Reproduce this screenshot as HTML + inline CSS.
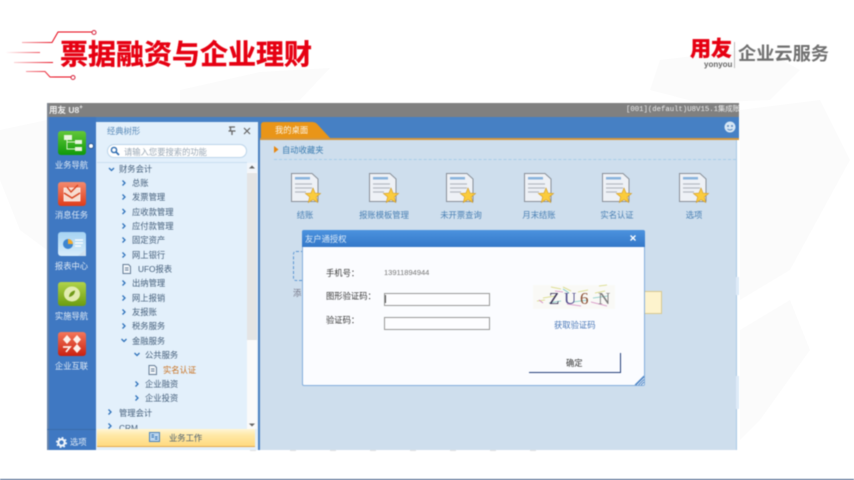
<!DOCTYPE html>
<html><head><meta charset="utf-8">
<style>
html,body{margin:0;padding:0;background:#fff}
body{width:854px;height:480px;position:relative;overflow:hidden;font-family:"Liberation Sans","Noto Sans CJK SC",sans-serif}
div,span{position:absolute;white-space:nowrap}
svg{position:absolute;overflow:visible}
#shot{left:0;top:0;width:854px;height:480px;filter:blur(.5px)}
.t{font-size:8.3px;color:#46607c;line-height:10px;height:10px}
.sl{font-size:8.3px;color:#dfeaf6;left:47px;width:49px;text-align:center;line-height:10px}
.lab{font-size:8.3px;color:#4a80b4;line-height:10px;transform:translateX(-50%)}
.f{font-size:8.3px;color:#3a3a3a;left:326px;line-height:10px}
.inp{left:384px;width:104px;height:11px;background:#fdfdff;border:1px solid #999}
</style></head>
<body>
<svg style="left:0;top:0" width="854" height="480">
<g fill="#fbfbfb">
<path d="M180 90L260 72L330 68L300 100L250 103L180 103Z"/>
<path d="M660 60L760 48L800 70L770 100L700 103L650 90Z"/>
<path d="M740 110L820 100L850 160L790 270L740 300Z"/>
<path d="M740 330L790 300L810 350L760 420L740 440Z"/>
<path d="M0 130L47 120L47 250L20 230L0 180Z"/>
</g>
</svg>
<div id="shot">
<!-- header -->
<svg style="left:0;top:0" width="120" height="90" fill="none" stroke-width="1">
<defs>
<linearGradient id="a" gradientUnits="userSpaceOnUse" x1="5" x2="55" y1="0" y2="0"><stop offset="0" stop-color="#e60012" stop-opacity="0"/><stop offset="1" stop-color="#e60012"/></linearGradient>
</defs>
<path d="M22 42.5H52L58 32H92" stroke="url(#a)"/>
<path d="M6 52.5H40" stroke="url(#a)"/>
<path d="M14 62.5H53" stroke="url(#a)"/>
<path d="M26 71.5H45L50 77H72" stroke="url(#a)"/>
<circle cx="94" cy="32.5" r="2" stroke="#d6203a" fill="#fff"/>
<circle cx="73" cy="77.5" r="2" stroke="#d6203a" fill="#fff"/>
</svg>
<div style="left:60px;top:36px;font-size:28px;line-height:38px;font-weight:700;color:#e60012;-webkit-text-stroke:.4px #e60012">票据融资与企业理财</div>
<div style="left:690px;top:37px;font-size:21px;line-height:26px;font-weight:900;color:#e60012;-webkit-text-stroke:.3px #e60012">用友</div>
<div style="left:704px;top:60px;font-size:8px;line-height:9px;color:#666;font-weight:700">yonyou</div>
<div style="left:734px;top:42px;width:1px;height:26px;background:#bbb"></div>
<div style="left:738px;top:42px;font-size:18.2px;line-height:24px;font-weight:700;color:#707070">企业云服务</div>

<!-- app frame -->
<div style="left:47px;top:103px;width:692px;height:14px;background:#808080"></div>
<div style="left:49px;top:105px;font-size:8.5px;line-height:10px;font-weight:700;color:#eee">用友 U8<sup style="font-size:6px;line-height:0">+</sup></div>
<div style="left:626px;top:105px;width:113px;overflow:hidden;font-family:'Liberation Mono','Noto Sans CJK SC',monospace;font-size:7.3px;line-height:10px;color:#eee">[001](default)U8V15.1集成账套</div>
<div style="left:47px;top:117px;width:692px;height:21px;background:#4680c4"></div>
<div style="left:47px;top:117px;width:49px;height:333px;background:#3f78c2"></div>
<div style="left:47px;top:103px;width:2px;height:347px;background:#7f8a99;opacity:.6"></div>

<!-- tree panel -->
<div style="left:96px;top:122px;width:162px;height:328px;background:#e3f0fb"></div>
<div style="left:97px;top:162px;width:150px;height:1px;background:#c9dff1"></div>
<div style="left:107px;top:126px;font-size:8.3px;line-height:10px;color:#5a8ab8">经典树形</div>
<svg style="left:227px;top:126px" width="30" height="10"><path d="M2 1H8M3.500 1V5H1.500L5 5H8.500M5 5V9" stroke="#666" stroke-width="1.300" fill="none"/><path d="M17 2L23 8M23 2L17 8" stroke="#666" stroke-width="1.200"/></svg>
<div style="left:107px;top:144px;width:138px;height:12px;background:#fff;border:1px solid #bcd5ea;border-radius:7px"></div>
<svg style="left:110px;top:146px" width="10" height="10"><circle cx="4" cy="4" r="2.600" fill="none" stroke="#2e6cb0" stroke-width="1.400"/><path d="M6 6L9 9" stroke="#2e6cb0" stroke-width="1.600"/></svg>
<div style="left:124px;top:147px;font-size:8.3px;line-height:10px;color:#9aa8b6">请输入您要搜索的功能</div>

<!-- scrollbar -->
<div style="left:247px;top:163px;width:10px;height:266px;background:#fafafa"></div>
<div style="left:247px;top:173px;width:10px;height:167px;background:#e4e4e4"></div>
<div style="left:247px;top:163px;width:10px;height:9px;background:#f2f6fa"></div>
<svg style="left:249px;top:165px" width="6" height="4"><path d="M0 3.500L3 .5L6 3.500Z" fill="#666"/></svg>
<svg style="left:249px;top:423px" width="6" height="4"><path d="M0 .5L3 3.500L6 .5Z" fill="#666"/></svg>

<!-- tree -->
<svg style="left:96px;top:160px" width="60" height="280" fill="none" stroke="#2f72bb" stroke-width="1.300">
<path d="M13 8L15.500 10.500L18 8"/>
<path d="M26.500 20.500L29 23L26.500 25.500M26.500 34.500L29 37L26.500 39.500M26.500 49L29 51.500L26.500 54M26.500 63.500L29 66L26.500 68.500M26.500 77.500L29 80L26.500 82.500M26.500 92.500L29 95L26.500 97.500"/>
<path d="M26.500 120.500L29 123L26.500 125.500M26.500 135.500L29 138L26.500 140.500M26.500 149.500L29 152L26.500 154.500M26.500 163.500L29 166L26.500 168.500"/>
<path d="M25.500 179L28 181.500L30.500 179"/>
<path d="M38.500 193L41 195.500L43.500 193"/>
<path d="M39.500 221.500L42 224L39.500 226.500M39.500 235.500L42 238L39.500 240.500"/>
<path d="M12.500 249.500L15 252L12.500 254.500M12.500 263.500L15 266L12.500 268.500"/>
</svg>
<div class="t" style="left:119px;top:164px">财务会计</div>
<div class="t" style="left:132px;top:178px">总账</div>
<div class="t" style="left:132px;top:192px">发票管理</div>
<div class="t" style="left:132px;top:207px">应收款管理</div>
<div class="t" style="left:132px;top:221px">应付款管理</div>
<div class="t" style="left:132px;top:235px">固定资产</div>
<div class="t" style="left:132px;top:250px">网上银行</div>
<svg style="left:122px;top:264px" width="10" height="10"><path d="M1 .5H6.500L8.500 2.500V9.500H1Z" fill="#f2f6fa" stroke="#667d96"/><path d="M3 4H6.500M3 6H6.500" stroke="#667d96"/></svg>
<div class="t" style="left:138px;top:264px">UFO报表</div>
<div class="t" style="left:132px;top:278px">出纳管理</div>
<div class="t" style="left:132px;top:293px">网上报销</div>
<div class="t" style="left:132px;top:307px">友报账</div>
<div class="t" style="left:132px;top:321px">税务服务</div>
<div class="t" style="left:132px;top:336px">金融服务</div>
<div class="t" style="left:145px;top:350px">公共服务</div>
<svg style="left:148px;top:365px" width="10" height="10"><path d="M1 .5H6.500L8.500 2.500V9.500H1Z" fill="#f2f6fa" stroke="#667d96"/><path d="M3 4H6.500M3 6H6.500" stroke="#667d96"/></svg>
<div class="t" style="left:163px;top:365px;color:#c9701e">实名认证</div>
<div class="t" style="left:145px;top:379px">企业融资</div>
<div class="t" style="left:145px;top:393px">企业投资</div>
<div class="t" style="left:119px;top:408px">管理会计</div>
<div class="t" style="left:119px;top:423px;height:6px;overflow:hidden">CRM</div>

<!-- work button -->
<div style="left:97px;top:429px;width:158px;height:18px;background:linear-gradient(#fff6d5,#ffe9a8 35%,#ffdc85 90%);border-bottom:1px solid #e6a94a;box-sizing:border-box"></div>
<svg style="left:149px;top:432px" width="11" height="10"><rect x=".5" y=".5" width="10" height="9" fill="#bcd6ee" stroke="#4b82bd"/><path d="M2.500 3H5M2.500 5H5M6 5H8.500M6 7H8.500" stroke="#2b6cb0"/></svg>
<div style="left:169px;top:433px;font-size:8.3px;line-height:10px;color:#4a5d70">业务工作</div>

<!-- sidebar icons -->
<svg style="left:58px;top:131px" width="30" height="26">
<defs><linearGradient id="g" x1="0" x2="0" y1="0" y2="1"><stop offset="0" stop-color="#63c73a"/><stop offset="1" stop-color="#0f9a0a"/></linearGradient></defs>
<rect width="28" height="24" rx="3" fill="url(#g)"/>
<rect x="6" y="4" width="8" height="5" fill="#e8f5df"/><rect x="17" y="9" width="7" height="4" fill="#e8f5df"/><rect x="17" y="16" width="7" height="4" fill="#e8f5df"/>
<path d="M9 9V18H17M9 11H17" stroke="#d8f0c8" fill="none"/>
</svg>
<div style="left:88px;top:143px;width:6px;height:6px;background:#fff;border-radius:50%;border:1px solid #28558f;box-sizing:border-box"></div>
<div class="sl" style="top:160px">业务导航</div>
<svg style="left:58px;top:182px" width="28" height="24">
<defs><linearGradient id="r" x1="0" x2="0" y1="0" y2="1"><stop offset="0" stop-color="#f48a6e"/><stop offset="1" stop-color="#df3c1a"/></linearGradient></defs>
<rect width="28" height="24" rx="3" fill="url(#r)"/>
<rect x="6" y="6" width="16" height="13" fill="#f7dccf" stroke="#fff" stroke-width=".7"/>
<path d="M6 11L14 16L22 11M9 5L13 10L20 3" stroke="#d8431f" fill="none" stroke-width="1.400"/>
</svg>
<div class="sl" style="top:210px">消息任务</div>
<svg style="left:58px;top:232px" width="28" height="24">
<defs><linearGradient id="b" x1="0" x2="0" y1="0" y2="1"><stop offset="0" stop-color="#a5d3f3"/><stop offset="1" stop-color="#d9edfb"/></linearGradient></defs>
<rect width="28" height="24" rx="3" fill="url(#b)"/>
<circle cx="10" cy="12" r="5" fill="#3d85d0"/><path d="M10 7A5 5 0 0 1 15 12H10Z" fill="#f4ab2c"/>
<path d="M17 8H25M17 11H25M17 14H23" stroke="#fff" stroke-width="1.300"/>
<path d="M20 24L28 17V24Z" fill="#cfe0ef"/>
</svg>
<div class="sl" style="top:261px">报表中心</div>
<svg style="left:58px;top:282px" width="28" height="24">
<defs><linearGradient id="o" x1="0" x2="0" y1="0" y2="1"><stop offset="0" stop-color="#b1d34a"/><stop offset="1" stop-color="#6c9d10"/></linearGradient></defs>
<rect width="28" height="24" rx="3" fill="url(#o)"/>
<ellipse cx="14" cy="12" rx="8" ry="7.500" fill="#e2ecb1"/>
<path d="M11 15C11 11.500 13.500 9 17 8.500C17 12 14.500 14.500 11 15Z" fill="#6f9a18"/>
</svg>
<div class="sl" style="top:311px">实施导航</div>
<svg style="left:58px;top:332px" width="28" height="24">
<defs><linearGradient id="e" x1="0" x2="0" y1="0" y2="1"><stop offset="0" stop-color="#f4775b"/><stop offset="1" stop-color="#c9200f"/></linearGradient></defs>
<rect width="28" height="24" rx="3" fill="url(#e)"/>
<g fill="#fdf1ea"><path d="M9 3L13 7.500L9 12L5 7.500Z"/><path d="M19 3L23 7.500L19 12L15 7.500Z"/><path d="M19 12L23 16.500L19 21L15 16.500Z"/></g>
<path d="M5 15H12L8 20" stroke="#fdf1ea" stroke-width="1.800" fill="none"/>
</svg>
<div class="sl" style="top:361px">企业互联</div>
<div style="left:47px;top:429px;width:49px;height:1px;background:#3a6cab"></div>
<svg style="left:56px;top:437px" width="11" height="11"><circle cx="5.500" cy="5.500" r="3.200" fill="none" stroke="#f0f5fb" stroke-width="2.200"/><circle cx="5.500" cy="5.500" r="4.800" fill="none" stroke="#f0f5fb" stroke-width="1.500" stroke-dasharray="1.800 1.970"/></svg>
<div class="sl" style="left:70px;width:auto;top:437px">选项</div>

<!-- right panel -->
<div style="left:258px;top:122px;width:2px;height:328px;background:#4a80bf"></div>
<div style="left:260px;top:138px;width:476px;height:312px;background:#cedeed;border-right:1px solid #a9c8e6"></div>
<div style="left:260px;top:138px;width:479px;height:1.500px;background:#d5973d"></div>
<svg style="left:261px;top:122px" width="72" height="17"><path d="M0 16V3Q0 0 3 0H51Q55 0 57 3L69 16Z" fill="#e99518"/></svg>
<div style="left:275px;top:125px;font-size:8.3px;line-height:10px;color:#fdf4e3">我的桌面</div>
<svg style="left:724px;top:121px" width="12" height="12"><circle cx="6" cy="6" r="5.500" fill="#d6e6f5"/><circle cx="4" cy="5" r="1" fill="#5f8cbf"/><circle cx="8" cy="5" r="1" fill="#5f8cbf"/><path d="M3.500 8Q6 10 8.500 8" stroke="#5f8cbf" fill="none"/></svg>
<svg style="left:274px;top:146px" width="5" height="8"><path d="M0 0L4.500 3.500L0 7Z" fill="#e8870e"/></svg>
<div style="left:282px;top:145px;font-size:8.3px;line-height:10px;color:#3a7bb0">自动收藏夹</div>
<div style="left:274px;top:159px;width:462px;border-top:1px dashed #a6cdea"></div>

<!-- desktop icons -->
<svg width="0" height="0" style="left:0;top:0"><defs>
<g id="d">
<path d="M.5 .5H21L27 6V28.500H.5Z" fill="#eef1f6" stroke="#8a9099"/>
<path d="M4 4H19V6.500H4Z" fill="#8ab3dc"/>
<path d="M4 11H21M4 15H21M4 19H15" stroke="#b5bac2" stroke-width="1.200"/>
<path d="M22 15L24.100 20.100L29.600 20.500L25.400 23.900L26.700 29.500L22 26.600L17.300 29.500L18.600 23.900L14.400 20.500L19.900 20.100Z" fill="#fbcc3c" stroke="#d09a2a" stroke-width=".6"/>
</g></defs></svg>
<svg style="left:291px;top:173px" width="35" height="34"><use href="#d"/></svg>
<svg style="left:369px;top:173px" width="35" height="34"><use href="#d"/></svg>
<svg style="left:446px;top:173px" width="35" height="34"><use href="#d"/></svg>
<svg style="left:524px;top:173px" width="35" height="34"><use href="#d"/></svg>
<svg style="left:602px;top:173px" width="35" height="34"><use href="#d"/></svg>
<svg style="left:679px;top:173px" width="35" height="34"><use href="#d"/></svg>
<div class="lab" style="left:305px;top:210px">结账</div>
<div class="lab" style="left:384px;top:210px">报账模板管理</div>
<div class="lab" style="left:461px;top:210px">未开票查询</div>
<div class="lab" style="left:539px;top:210px">月末结账</div>
<div class="lab" style="left:617px;top:210px">实名认证</div>
<div class="lab" style="left:694px;top:210px">选项</div>

<!-- behind dialog -->
<div style="left:293px;top:251px;width:12px;height:28px;border:1px dashed #5b96d2;border-right:0;border-radius:3px 0 0 3px"></div>
<div style="left:293px;top:288px;font-size:8.3px;line-height:10px;color:#778">添</div>
<div style="left:645px;top:291px;width:17px;height:23px;background:#fdf3cd;border:1px solid #d8c890;border-left:0;box-sizing:border-box"></div>
<div style="left:736px;top:277px;width:3px;height:18px;background:#deebf8"></div>
<div style="left:736px;top:376px;width:3px;height:33px;background:#deebf8"></div>
<div style="left:250px;top:450px;width:300px;height:1px;background:repeating-linear-gradient(90deg,#ccc 0 6px,transparent 6px 40px);opacity:.6"></div>

<!-- dialog -->
<div style="left:302px;top:230px;width:343px;height:156px;background:#fbfcff;border:1px solid #83aedc;box-sizing:border-box;border-radius:2px"></div>
<div style="left:302px;top:230px;width:343px;height:17px;background:linear-gradient(#4b92de,#3478c9);border-radius:2px 2px 0 0"></div>
<div style="left:305px;top:234px;font-size:8.3px;line-height:10px;color:#d8e8f8">友户通授权</div>
<svg style="left:630px;top:235px" width="6" height="6"><path d="M.5 .5L5.500 5.500M5.500 .5L.5 5.500" stroke="#fff" stroke-width="1.300"/></svg>
<div class="f" style="top:268px">手机号：</div>
<div style="left:384px;top:268px;font-size:7.500px;line-height:10px;color:#777">13911894944</div>
<div class="f" style="top:291px">图形验证码：</div>
<div class="f" style="top:315px">验证码：</div>
<div class="inp" style="top:293px"></div>
<div class="inp" style="top:317px"></div>
<div style="left:385px;top:295px;width:1px;height:8px;background:#555"></div>

<!-- captcha -->
<svg style="left:533px;top:284px" width="84" height="26">
<rect x="0" y="1" width="82" height="24" fill="#f9f9f6"/>
<g stroke-width=".8" fill="none">
<path d="M10 14L22 12M18 3L28 5M30 3L38 7M45 8L55 6M62 9L72 7M66 2L74 1M4 17L12 16" stroke="#d6d77a"/>
<path d="M16 19L28 17M40 18L55 16M60 14L75 12M30 5L36 9" stroke="#7dc9c2"/>
<path d="M6 16L10 19M34 20L48 22M58 18L74 22M22 7L30 8" stroke="#d58bc2"/>
</g>
<text x="16" y="20" font-family="Liberation Serif,serif" font-size="17" fill="#3d3558">Z</text>
<text x="31" y="20" font-family="Liberation Serif,serif" font-size="17" fill="#4d4a8a">U</text>
<text x="47" y="20" font-family="Liberation Serif,serif" font-size="17" fill="#8a5034">6</text>
<text x="65" y="20" font-family="Liberation Serif,serif" font-size="17" fill="#7a7a7a">N</text>
</svg>
<div style="left:554px;top:320px;font-size:8.300px;line-height:10px;color:#4a78b8">获取验证码</div>
<div style="left:529px;top:353px;width:92px;height:20px;box-sizing:border-box;border-right:1.500px solid #24407a;border-bottom:1.500px solid #24407a"></div>
<div style="left:566px;top:358px;font-size:8.300px;line-height:10px;color:#333">确定</div>
<svg style="left:635px;top:376px" width="10" height="10"><path d="M9 1L1 9M9 3.500L3.500 9M9 6L6 9M9 0L0 9" stroke="#4f86c6"/></svg>

<div style="left:0;top:479px;width:854px;height:1px;background:#3b5580"></div>
</div>
</body></html>
